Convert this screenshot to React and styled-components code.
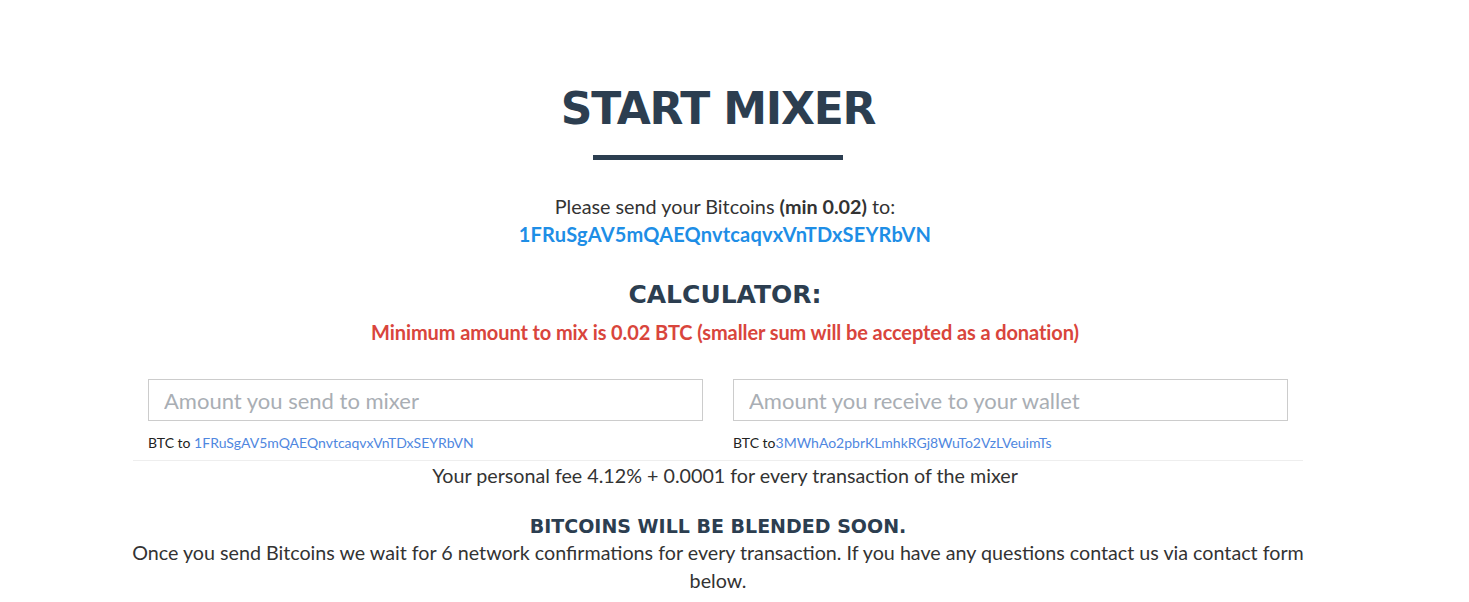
import React from "react";
import styled, { createGlobalStyle } from "styled-components";

const GlobalStyle = createGlobalStyle`
  html, body {
    margin: 0;
    padding: 0;
    background: #fff;
  }
  body {
    font-family: Lato, "Liberation Sans", sans-serif;
    color: #333;
  }
  * {
    box-sizing: border-box;
  }
`;

const Page = styled.div`
  padding: 82px 33px 0 0;
`;

const Container = styled.section`
  width: 1170px;
  margin: 0 auto;
  text-align: center;
`;

const Inner = styled.div`
  padding-left: 14px;
`;

const Title = styled.h1`
  margin: 0;
  font-family: "DejaVu Sans", "Noto Sans", sans-serif;
  font-weight: 700;
  font-size: 44px;
  line-height: 54px;
  color: #2c3e50;
  letter-spacing: -1.2px;
`;

const TitleBar = styled.div`
  width: 250px;
  height: 5px;
  margin: 19px auto 32px;
  background: #2c3e50;
`;

const Lead = styled.p`
  margin: 0;
  font-size: 19.8px;
  line-height: 28px;
  color: #333;

  b {
    font-weight: 700;
  }
`;

const Address = styled.a`
  display: block;
  font-size: 20px;
  line-height: 28px;
  font-weight: 700;
  letter-spacing: 0.18px;
  color: #1e8ee6;
  text-decoration: none;
`;

const SubTitle = styled.h2`
  margin: ${(p) => p.$top || "29px"} 0 0;
  font-family: "DejaVu Sans", "Noto Sans", sans-serif;
  font-weight: 700;
  font-size: ${(p) => p.$size || "25px"};
  line-height: ${(p) => p.$lh || "36px"};
  color: #2c3e50;
`;

const Warning = styled.p`
  margin: 4px 0 0;
  font-size: 20px;
  line-height: 30px;
  font-weight: 700;
  letter-spacing: -0.1px;
  color: #d9453c;
`;

const Row = styled.div`
  display: grid;
  grid-template-columns: 1fr 1fr;
  margin-top: 32px;
  padding-bottom: 8px;
  border-bottom: 1px solid #eee;
  text-align: left;
`;

const Col = styled.div`
  padding: 0 15px;
`;

const Input = styled.input`
  display: block;
  width: 100%;
  height: 42px;
  padding: 0 15px;
  border: 1px solid #ccc;
  border-radius: 0;
  font-family: Lato, "Liberation Sans", sans-serif;
  font-size: 22px;
  color: #333;
  outline: none;

  &::placeholder {
    color: #a9aeb4;
  }
`;

const Hint = styled.div`
  margin-top: 13px;
  font-size: 14px;
  line-height: 18px;
  color: #222;

  a {
    color: #4f87e0;
    text-decoration: none;
  }
`;

const Fee = styled.p`
  margin: 1px 0 0;
  padding-left: 14px;
  font-size: 19.7px;
  line-height: 27px;
  color: #333;
`;

const Text = styled.p`
  margin: 0 -12px;
  font-size: 19.7px;
  line-height: 28px;
  color: #333;
`;

export default function App() {
  return (
    <Page>
      <GlobalStyle />
      <Container>
        <Title>START MIXER</Title>
        <TitleBar />
        <Inner>
          <Lead>
            Please send your Bitcoins <b>(min 0.02)</b> to:
          </Lead>
          <Address href="#">1FRuSgAV5mQAEQnvtcaqvxVnTDxSEYRbVN</Address>

          <SubTitle>CALCULATOR:</SubTitle>
          <Warning>
            Minimum amount to mix is 0.02 BTC (smaller sum will be accepted as
            a donation)
          </Warning>
        </Inner>

        <Row>
          <Col>
            <Input placeholder="Amount you send to mixer" />
            <Hint>
              BTC to <a href="#">1FRuSgAV5mQAEQnvtcaqvxVnTDxSEYRbVN</a>
            </Hint>
          </Col>
          <Col>
            <Input placeholder="Amount you receive to your wallet" />
            <Hint>
              BTC to<a href="#">3MWhAo2pbrKLmhkRGj8WuTo2VzLVeuimTs</a>
            </Hint>
          </Col>
        </Row>
        <Fee>Your personal fee 4.12% + 0.0001 for every transaction of the mixer</Fee>

        <SubTitle $top="24px" $size="19px" $lh="26px">
          BITCOINS WILL BE BLENDED SOON.
        </SubTitle>
        <Text>
          Once you send Bitcoins we wait for 6 network confirmations for every
          transaction. If you have any questions contact us via contact form
          below.
        </Text>
      </Container>
    </Page>
  );
}
